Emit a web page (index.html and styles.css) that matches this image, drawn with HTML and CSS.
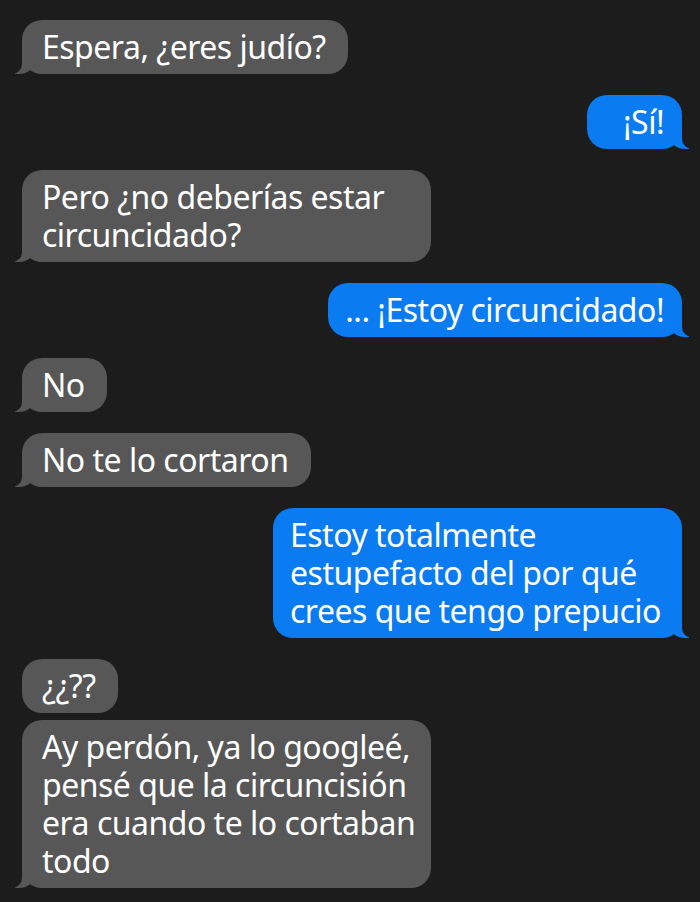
FILE: index.html
```html
<!DOCTYPE html>
<html lang="es">
<head>
    <meta charset="UTF-8">
    <meta name="viewport" content="width=device-width, initial-scale=1.0">
    <title>Mensajes</title>
    <link rel="stylesheet" href="styles.css">
</head>
<body>
    <div class="thread">
        <div class="msg received tail">Espera, ¿eres judío?</div>
        <div class="msg sent tail short">¡Sí!</div>
        <div class="msg received tail long">Pero ¿no deberías estar circuncidado?</div>
        <div class="msg sent tail">... ¡Estoy circuncidado!</div>
        <div class="msg received tail">No</div>
        <div class="msg received tail">No te lo cortaron</div>
        <div class="msg sent tail">Estoy totalmente estupefacto del por qué crees que tengo prepucio</div>
        <div class="msg received grouped">¿¿??</div>
        <div class="msg received tail long">Ay perdón, ya lo googleé, pensé que la circuncisión era cuando te lo cortaban todo</div>
    </div>
</body>
</html>
```
FILE: styles.css
```css
body {
    margin: 0;
    background-color: #1c1c1c;
    font-family: 'Noto Sans', 'Open Sans', sans-serif;
}
.thread {
    display: flex;
    flex-direction: column;
    padding: 20px 18px 0 22px;
}
.msg {
    position: relative;
    max-width: 409px;
    box-sizing: border-box;
    margin-bottom: 21px;
    padding: 8px 22px 8px 20px;
    border-radius: 20px;
    color: white;
    font-size: 32px;
    letter-spacing: -0.5px;
    line-height: 38px;
}
.msg.grouped {
    margin-bottom: 7px;
}
.msg.long {
    padding-right: 10px;
}
.received {
    align-self: flex-start;
    background-color: #575757;
}
.sent {
    align-self: flex-end;
    background-color: #0a7bf1;
    padding: 8px 18px 8px 17px;
}
.sent.short {
    padding-left: 36px;
}

/* bubble tails */
.tail::before,
.tail::after {
    content: "";
    position: absolute;
    bottom: 0;
    height: 20px;
}
.received.tail::before {
    left: -7px;
    width: 20px;
    background-color: #575757;
    border-bottom-right-radius: 16px 14px;
}
.received.tail::after {
    left: -26px;
    width: 26px;
    background-color: #1c1c1c;
    border-bottom-right-radius: 10px;
}
.sent.tail::before {
    right: -7px;
    width: 20px;
    background-color: #0a7bf1;
    border-bottom-left-radius: 16px 14px;
}
.sent.tail::after {
    right: -26px;
    width: 26px;
    background-color: #1c1c1c;
    border-bottom-left-radius: 10px;
}
```
